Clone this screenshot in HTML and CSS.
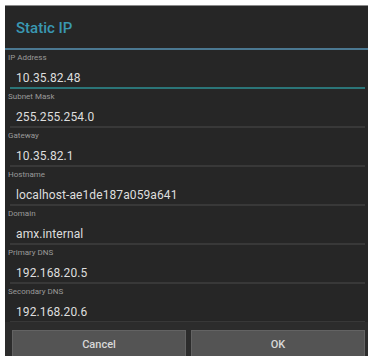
FILE: index.html
```html
<!DOCTYPE html>
<html>
<head>
<meta charset="utf-8">
<link rel="stylesheet" href="styles.css">
</head>
<body>
<div class="dialog">
  <div class="title">Static IP</div>
  <div class="fields">
    <div class="field active">
      <div class="label">IP Address</div>
      <div class="value">10.35.82.48</div>
    </div>
    <div class="field">
      <div class="label">Subnet Mask</div>
      <div class="value">255.255.254.0</div>
    </div>
    <div class="field">
      <div class="label">Gateway</div>
      <div class="value">10.35.82.1</div>
    </div>
    <div class="field">
      <div class="label">Hostname</div>
      <div class="value">localhost-ae1de187a059a641</div>
    </div>
    <div class="field">
      <div class="label">Domain</div>
      <div class="value">amx.internal</div>
    </div>
    <div class="field">
      <div class="label">Primary DNS</div>
      <div class="value">192.168.20.5</div>
    </div>
    <div class="field">
      <div class="label">Secondary DNS</div>
      <div class="value">192.168.20.6</div>
    </div>
  </div>
  <div class="buttons">
    <button class="btn">Cancel</button>
    <button class="btn">OK</button>
  </div>
</div>
</body>
</html>
```
FILE: styles.css
```css
html, body {
  margin: 0;
  padding: 0;
  background: #ffffff;
}
body {
  padding: 5px 2px 0 5px;
  font-family: Roboto, "Liberation Sans", sans-serif;
}
.dialog {
  height: 351px;
  background: #262626;
  border-top: 1px solid #8a8a8a;
  overflow: hidden;
  display: flex;
  flex-direction: column;
}
.title {
  height: 42px;
  line-height: 44px;
  padding-left: 11px;
  font-size: 15px;
  font-weight: 500;
  color: #3a98b2;
  border-bottom: 2px solid #4b7891;
}
.fields {
  display: flex;
  flex-direction: column;
}
.field {
  height: 39px;
  box-sizing: border-box;
  padding: 3px 3px 0 3px;
}
.label {
  font-size: 8px;
  line-height: 10px;
  color: #9a9a9a;
  margin-bottom: 7px;
}
.value {
  margin-left: 2px;
  padding-left: 6px;
  font-size: 12px;
  letter-spacing: 0.1px;
  line-height: 17px;
  color: #dedede;
  border-bottom: 2px solid #383838;
}
.field.active .value {
  border-bottom-color: #2b7578;
}
.buttons {
  flex: 1;
  margin-top: -1px;
  background: #2c2c2c;
  display: flex;
  gap: 5px;
  padding: 8px 3px 0 7px;
}
.btn {
  flex: 1;
  height: 30px;
  background: #545454;
  border: 1px solid #636363;
  color: #d8d8d8;
  font-family: Roboto, "Liberation Sans", sans-serif;
  font-size: 11px;
  font-weight: 500;
  padding: 0 0 2px 0;
}
```
